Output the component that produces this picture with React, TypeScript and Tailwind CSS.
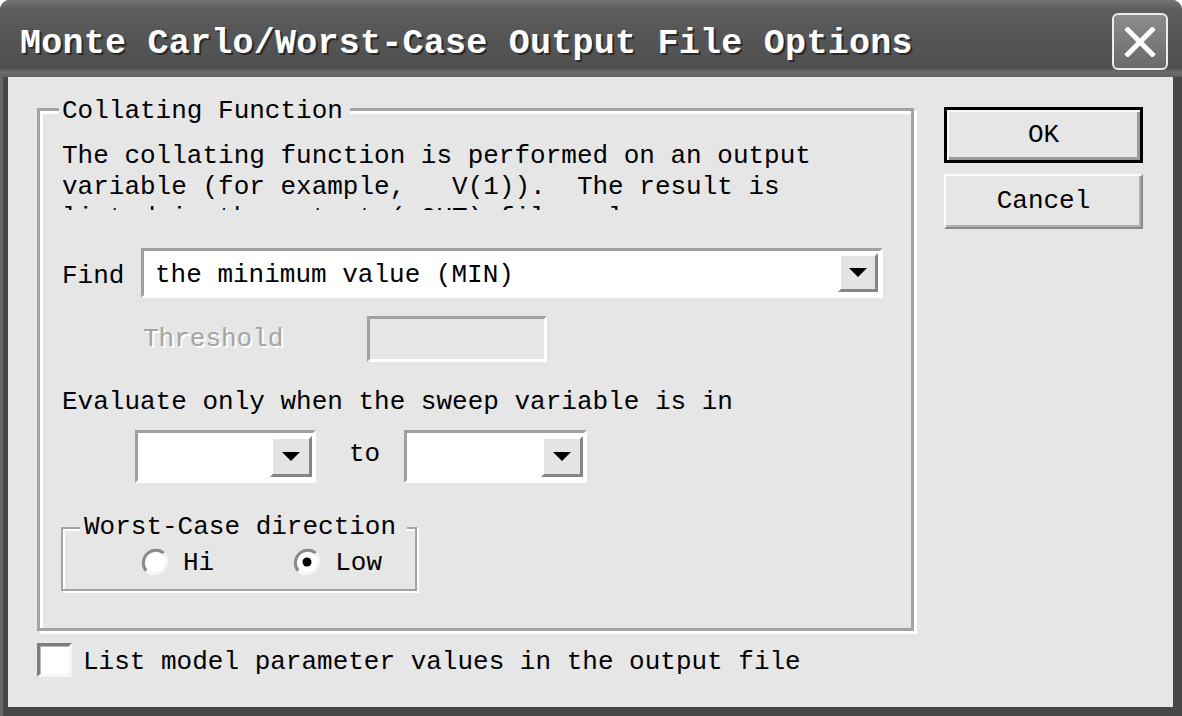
import React from 'react';

function DropArrow() {
  return (
    <svg width="20" height="10" viewBox="0 0 20 10">
      <path d="M1 0h18l-9 9z" fill="#000" />
    </svg>
  );
}

function ComboButton({ className }: { className: string }) {
  return (
    <div
      className={`flex items-center justify-center border-[3px] border-t-white border-l-white border-b-[#858585] border-r-[#858585] bg-[#e4e4e4] ${className}`}
    >
      <DropArrow />
    </div>
  );
}

function Radio({ checked }: { checked?: boolean }) {
  return (
    <svg width="30" height="30" viewBox="0 0 30 30" className="shrink-0">
      <circle cx="15" cy="15" r="12.5" fill="#fff" />
      <path d="M6.2 23.8A12.5 12.5 0 0 1 23.8 6.2" stroke="#8a8a8a" strokeWidth="3" fill="none" />
      <path d="M23.8 6.2A12.5 12.5 0 0 1 6.2 23.8" stroke="#f6f6f6" strokeWidth="3" fill="none" />
      {checked && <circle cx="15" cy="15" r="4.5" fill="#000" />}
    </svg>
  );
}

function TitleBar() {
  return (
    <div className="flex h-[77px] shrink-0 items-start bg-[linear-gradient(to_bottom,#747474_0px,#5e5e5e_9px,#575757_30px,#4f4f4f_68px,#6c6c6c_72px,#606060_77px)] pl-[20px] pr-[14px]">
      <span className="mt-[24px] flex-1 text-[35px] font-bold leading-[40px] tracking-[0.25px] text-white [text-shadow:2px_2px_0_#2a2a2a]">
        Monte Carlo/Worst-Case Output File Options
      </span>
      <button className="mt-[13px] flex h-[57px] w-[56px] items-center justify-center rounded-[6px] border-2 border-[#ececec] bg-[linear-gradient(to_bottom,#8c8c8c,#6a6a6a)]">
        <svg width="32" height="30" viewBox="0 0 32 30">
          <path d="M2 1L30 29M30 1L2 29" stroke="#fff" strokeWidth="5" />
        </svg>
      </button>
    </div>
  );
}

export default function App() {
  return (
    <div className="h-[716px] w-[1182px] bg-white font-['Liberation_Mono','DejaVu_Sans_Mono',monospace] text-[26px] leading-[31px] text-black">
      <div className="flex h-full flex-col overflow-hidden rounded-t-[10px] bg-[#474747] shadow-[inset_3px_0_0_#666]">
        <TitleBar />

        <div className="ml-[8px] mr-[9px] h-[630px] bg-[#e6e6e6] pl-[29px] pt-[31px]">
          <div className="flex items-start">
            {/* Collating Function group */}
            <div className="relative h-[523px] w-[877px] shrink-0 border-[3px] border-[#a3a3a3] shadow-[inset_3px_3px_0_#fff,3px_3px_0_#fff]">
              <span className="absolute -top-[15px] left-[19px] bg-[#e6e6e6] pl-[3px] pr-[7px]">Collating Function</span>

              <div className="pl-[22px]">
                <p className="mt-[30px] h-[69px] w-[800px] overflow-hidden whitespace-pre">
                  {'The collating function is performed on an output\nvariable (for example,   V(1)).  The result is\nlisted in the output (.OUT) file only.'}
                </p>

                <div className="mt-[38px] flex items-start">
                  <span className="w-[79px] pt-[13px]">Find</span>
                  <div className="flex h-[50px] w-[742px] border-[3px] border-t-[#a0a0a0] border-l-[#a0a0a0] border-b-white border-r-white bg-white">
                    <span className="flex-1 pl-[11px] pt-[9px]">the minimum value (MIN)</span>
                    <ComboButton className="mr-[2px] mt-[2px] h-[39px] w-[40px]" />
                  </div>
                </div>

                <div className="mt-[18px] flex items-start">
                  <span className="ml-[81px] w-[224px] pt-[8px] text-[#a4a4a4] [text-shadow:2px_2px_0_#fff]">Threshold</span>
                  <div className="h-[46px] w-[180px] border-[3px] border-t-[#a0a0a0] border-l-[#a0a0a0] border-b-white border-r-white" />
                </div>

                <p className="mt-[25px]">Evaluate only when the sweep variable is in</p>

                <div className="mt-[12px] flex items-start">
                  <div className="ml-[73px] flex h-[53px] w-[181px] border-[3px] border-t-[#a0a0a0] border-l-[#a0a0a0] border-b-white border-r-white bg-white">
                    <div className="flex-1" />
                    <ComboButton className="mr-[1px] mt-[3px] h-[41px] w-[42px]" />
                  </div>
                  <span className="ml-[33px] w-[55px] pt-[9px]">to</span>
                  <div className="flex h-[53px] w-[183px] border-[3px] border-t-[#a0a0a0] border-l-[#a0a0a0] border-b-white border-r-white bg-white">
                    <div className="flex-1" />
                    <ComboButton className="mr-[1px] mt-[3px] h-[41px] w-[42px]" />
                  </div>
                </div>

                {/* Worst-Case direction group */}
                <div className="relative -ml-[1px] mt-[44px] h-[64px] w-[356px] border-2 border-[#a3a3a3] shadow-[inset_2px_2px_0_#fff,2px_2px_0_#fff]">
                  <span className="absolute -top-[17px] left-[17px] bg-[#e6e6e6] pl-[4px] pr-[11px]">Worst-Case direction</span>
                  <div className="flex items-start pt-[19px]">
                    <span className="ml-[77px] -mt-[1px]"><Radio /></span>
                    <span className="ml-[13px]">Hi</span>
                    <span className="ml-[78px] -mt-[1px]"><Radio checked /></span>
                    <span className="ml-[13px]">Low</span>
                  </div>
                </div>
              </div>
            </div>

            {/* Buttons */}
            <div className="-mt-[1px] ml-[30px] flex w-[199px] flex-col gap-[11px]">
              <button className="h-[56px] w-full border-[3px] border-black bg-[#e6e6e6] shadow-[inset_2px_2px_0_#fafafa,inset_-3px_-3px_0_#9a9a9a]">
                OK
              </button>
              <button className="h-[55px] w-full border-[2px] border-t-[#fafafa] border-l-[#fafafa] border-b-[#8a8a8a] border-r-[#8a8a8a] bg-[#e6e6e6] shadow-[inset_-2px_-2px_0_#b0b0b0]">
                Cancel
              </button>
            </div>
          </div>

          <label className="mt-[12px] flex items-start">
            <span className="h-[34px] w-[35px] shrink-0 border-[3px] border-t-[#7e7e7e] border-l-[#7e7e7e] border-b-[#f6f6f6] border-r-[#f6f6f6] bg-white shadow-[inset_1px_1px_0_#b8b8b8]" />
            <span className="ml-[11px] pt-[4px]">List model parameter values in the output file</span>
          </label>
        </div>
      </div>
    </div>
  );
}
